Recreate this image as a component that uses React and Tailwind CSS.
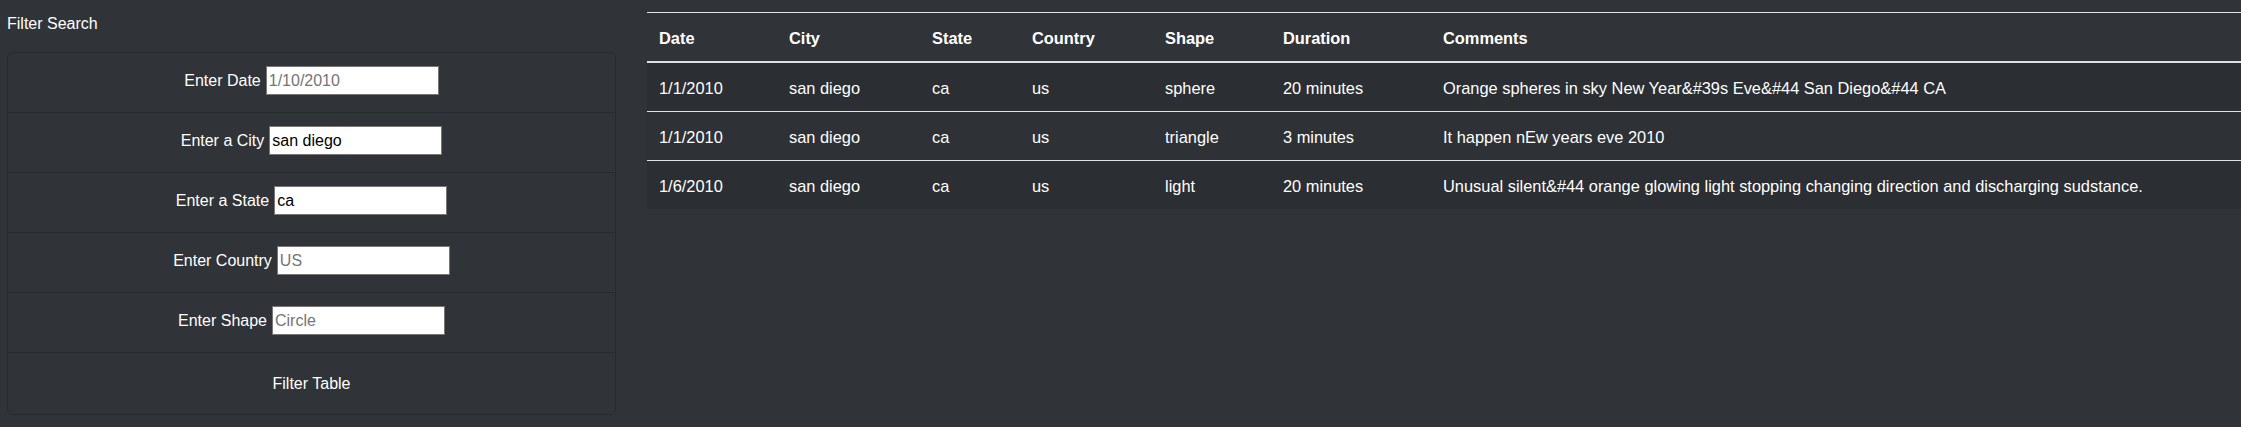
const rows = [
  {
    date: "1/1/2010",
    city: "san diego",
    state: "ca",
    country: "us",
    shape: "sphere",
    duration: "20 minutes",
    comments: "Orange spheres in sky New Year&#39s Eve&#44 San Diego&#44 CA",
  },
  {
    date: "1/1/2010",
    city: "san diego",
    state: "ca",
    country: "us",
    shape: "triangle",
    duration: "3 minutes",
    comments: "It happen nEw years eve 2010",
  },
  {
    date: "1/6/2010",
    city: "san diego",
    state: "ca",
    country: "us",
    shape: "light",
    duration: "20 minutes",
    comments:
      "Unusual silent&#44 orange glowing light stopping changing direction and discharging sudstance.",
  },
];

const filters = [
  { label: "Enter Date", placeholder: "1/10/2010" },
  { label: "Enter a City", value: "san diego" },
  { label: "Enter a State", value: "ca" },
  { label: "Enter Country", placeholder: "US" },
  { label: "Enter Shape", placeholder: "Circle" },
];

function FilterRow({ label, placeholder, value }) {
  return (
    <li className="h-[60px] pb-1 flex items-center justify-center gap-[5px] border-b border-[#272a2e]">
      <label className="text-white">{label}</label>
      <input
        type="text"
        placeholder={placeholder}
        defaultValue={value}
        className="w-[173px] h-[29px] bg-white text-black border border-[#767676] px-[2px] text-base placeholder:text-[#757575] outline-none"
      />
    </li>
  );
}

export default function App() {
  return (
    <div
      className="w-[2241px] h-[427px] bg-[#303338] flex text-base overflow-hidden"
      style={{ fontFamily: "'Liberation Sans', Arial, sans-serif" }}
    >
      {/* Filters */}
      <div className="w-[609px] ml-[7px] shrink-0">
        <p className="pt-3 leading-6 text-white">Filter Search</p>
        <ul className="mt-4 border border-[#272a2e] rounded-md">
          {filters.map((f) => (
            <FilterRow key={f.label} {...f} />
          ))}
          <li className="h-[61px] flex items-center justify-center">
            <button className="text-white cursor-pointer">Filter Table</button>
          </li>
        </ul>
      </div>

      {/* Results */}
      <div className="ml-[31px] flex-1 mt-3">
        <table className="w-full table-fixed border-collapse text-white text-left text-[16.4px]">
          <colgroup>
            <col className="w-[130px]" />
            <col className="w-[143px]" />
            <col className="w-[100px]" />
            <col className="w-[133px]" />
            <col className="w-[118px]" />
            <col className="w-[160px]" />
            <col />
          </colgroup>
          <thead>
            <tr className="border-t border-[#dee2e6] border-b-2">
              {["Date", "City", "State", "Country", "Shape", "Duration", "Comments"].map((h) => (
                <th key={h} className="px-3 pt-[13px] pb-[11px] leading-6 font-bold">
                  {h}
                </th>
              ))}
            </tr>
          </thead>
          <tbody>
            {rows.map((r, i) => (
              <tr
                key={i}
                className={`border-t border-[#dee2e6] ${i % 2 === 0 ? "bg-[#2b2e32]" : "bg-[#2e3135]"}`}
              >
                <td className="px-3 pt-[13px] pb-[11px] leading-6">{r.date}</td>
                <td className="px-3 pt-[13px] pb-[11px] leading-6">{r.city}</td>
                <td className="px-3 pt-[13px] pb-[11px] leading-6">{r.state}</td>
                <td className="px-3 pt-[13px] pb-[11px] leading-6">{r.country}</td>
                <td className="px-3 pt-[13px] pb-[11px] leading-6">{r.shape}</td>
                <td className="px-3 pt-[13px] pb-[11px] leading-6">{r.duration}</td>
                <td className="px-3 pt-[13px] pb-[11px] leading-6 whitespace-nowrap">{r.comments}</td>
              </tr>
            ))}
          </tbody>
        </table>
      </div>
    </div>
  );
}
